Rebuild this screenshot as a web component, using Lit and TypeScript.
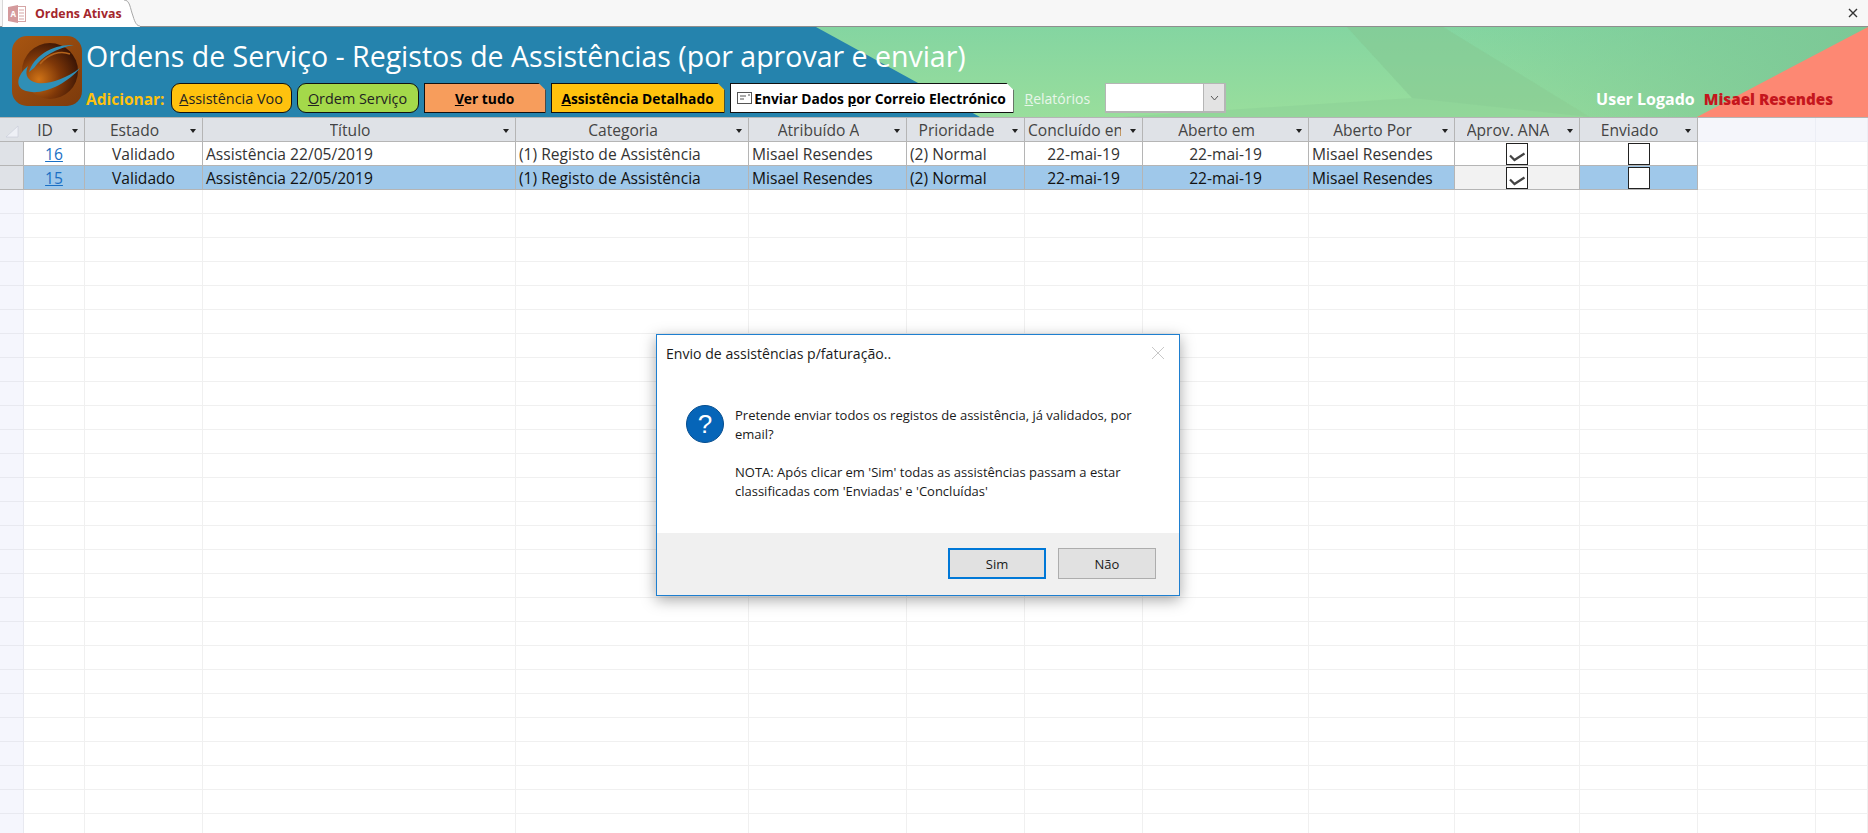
import { LitElement, html, css, svg, unsafeCSS } from "lit";
import { customElement } from "lit/decorators.js";

// column widths of the datasheet, left to right
const COLS = "24px 61px 118px 313px 233px 158px 118px 118px 166px 146px 125px 118px 118px 1fr";

const HEADERS = [
	"ID",
	"Estado",
	"Título",
	"Categoria",
	"Atribuído A",
	"Prioridade",
	"Concluído en",
	"Aberto em",
	"Aberto Por",
	"Aprov. ANA",
	"Enviado",
];

const ROWS = [
	{ id: "16", selected: false },
	{ id: "15", selected: true },
];

@customElement("app-root")
export class AppRoot extends LitElement {
	static styles = css`
		:host {
			display: block;
			height: 833px;
			overflow: hidden;
			position: relative;
			background: #fff;
			font-family: "Open Sans", "Noto Sans", sans-serif;
			color: #222;
		}
		.tabbar {
			height: 26px;
			background: #f7f7f7;
			border-bottom: 1px solid #8e8e8e;
			display: flex;
			justify-content: space-between;
		}
		.tab {
			width: 122px;
			height: 27px;
			margin-left: 2px;
			display: flex;
			align-items: center;
			gap: 9px;
			padding-left: 5px;
			box-sizing: border-box;
			background: #fff;
			border-left: 1px solid #d8d8d8;
			color: #a4262c;
			font-size: 12.4px;
			font-weight: 700;
			position: relative;
		}
		.tab-edge {
			position: absolute;
			left: 100%;
			top: 0;
			width: 16px;
			height: 27px;
		}
		.close {
			margin: 6px 8px 0 0;
			width: 14px;
			height: 14px;
		}
		.banner {
			height: 90px;
			position: relative;
			overflow: hidden;
			background: #2583ad;
		}
		.banner-bg {
			position: absolute;
			inset: 0;
			width: 100%;
			height: 100%;
		}
		.banner-main {
			position: relative;
			display: flex;
			height: 100%;
			padding: 9px 0 0 12px;
			box-sizing: border-box;
			gap: 4px;
		}
		.logo {
			width: 70px;
			height: 70px;
			flex: none;
		}
		.title {
			color: #fff;
			font-size: 28.5px;
			line-height: 40px;
			white-space: nowrap;
		}
		.toolbar {
			display: flex;
			align-items: center;
			gap: 5px;
			margin-top: 7px;
		}
		.add {
			color: #ffc20e;
			font-size: 15.5px;
			font-weight: 700;
			margin-right: 1px;
			margin-top: 2px;
		}
		.btn {
			height: 30px;
			box-sizing: border-box;
			border: 1px solid #111;
			display: flex;
			align-items: center;
			justify-content: center;
			font-size: 14.4px;
			color: #222;
			white-space: nowrap;
		}
		.btn.round {
			border-radius: 9px;
		}
		.btn.bold {
			font-size: 13.8px;
			font-weight: 700;
			color: #000;
		}
		.btn.cut {
			clip-path: polygon(0 0, calc(100% - 7px) 0, 100% 7px, 100% 100%, 0 100%);
		}
		.yellow {
			background: #ffc20e;
		}
		.green {
			background: #a4d94a;
		}
		.orange {
			background: #f79d5c;
		}
		.white {
			background: #fff;
		}
		.w-voo {
			width: 121px;
		}
		.w-ordem {
			width: 122px;
		}
		.w-ver {
			width: 122px;
		}
		.w-det {
			width: 174px;
		}
		.w-mail {
			width: 284px;
			gap: 2px;
		}
		.reports {
			color: #e8f6ea;
			font-size: 14px;
			margin: 0 10px 0 6px;
		}
		.combo {
			width: 121px;
			height: 30px;
			box-sizing: border-box;
			background: #fff;
			border-style: solid;
			border-color: #b5b5b5;
			border-width: 1px 2px 2px 1px;
			display: flex;
			justify-content: flex-end;
		}
		.combo span {
			width: 20px;
			background: #e3e3e3;
			border-left: 1px solid #b5b5b5;
			display: flex;
			align-items: center;
			justify-content: center;
		}
		.user {
			position: absolute;
			right: 35px;
			bottom: 7px;
			display: flex;
			align-items: baseline;
			gap: 9px;
			font-size: 16px;
			font-weight: 700;
			color: #fff;
		}
		.user b {
			color: #c5161d;
			font-size: 15.2px;
		}
		.sheet {
			display: grid;
			grid-template-columns: ${unsafeCSS(COLS)};
			grid-auto-rows: 24px;
			font-size: 15.6px;
			border-top: 1px solid #b5b5b5;
		}
		.cell {
			box-sizing: border-box;
			border-right: 1px solid #f0f0f0;
			border-bottom: 1px solid #f0f0f0;
			padding: 0 3px;
			white-space: nowrap;
			overflow: hidden;
			display: flex;
			align-items: center;
		}
		.blank-head {
			background: #f5f6fb;
			border-color: #eceef5;
		}
		.sel {
			background: #f5f6fd;
			border-color: #e8e9f0;
		}
		.sel.used {
			background: #dfe2e7;
			border-color: #b5b5b5;
		}
		.corner {
			background: #dfe2e7;
			border-right: 0;
			border-bottom: 1px solid #b5b5b5;
			padding: 0;
			justify-content: center;
		}
		.head {
			background: #dfe2e7;
			color: #444;
			border-right: 1px solid #b5b5b5;
			border-bottom: 1px solid #b5b5b5;
			justify-content: center;
			position: relative;
			padding-right: 21px;
		}
		.head span {
			overflow: hidden;
			min-width: 0;
		}
		.head i {
			position: absolute;
			right: 6px;
			top: 11px;
			border: 3px solid transparent;
			border-top: 4px solid #222;
			border-bottom: 0;
			width: 0;
			height: 0;
		}
		.data {
			border-right: 1px solid #b5b5b5;
			border-bottom: 1px solid #b5b5b5;
			color: #333;
		}
		.data.center {
			justify-content: center;
		}
		.data.selected {
			background: #9fc8ea;
			color: #111;
		}
		.data.flag {
			background: #f2f2f2;
		}
		.data a {
			color: #1a6fc4;
			text-decoration: underline;
		}
		.check {
			width: 22px;
			height: 22px;
			box-sizing: border-box;
			border: 1px solid #222;
			background: #fff;
			display: block;
		}
		.check svg {
			display: block;
		}
		.dialog {
			position: absolute;
			left: 656px;
			top: 334px;
			width: 524px;
			height: 262px;
			box-sizing: border-box;
			background: #fff;
			border: 1px solid #1e7fd0;
			box-shadow: 0 4px 14px rgba(0, 0, 0, 0.35);
			display: flex;
			flex-direction: column;
			font-size: 13px;
			color: #1a1a1a;
		}
		.dlg-title {
			height: 36px;
			padding: 0 14px 0 9px;
			display: flex;
			align-items: center;
			justify-content: space-between;
			font-size: 14.1px;
		}
		.dlg-body {
			flex: 1;
			display: flex;
			gap: 11px;
			padding: 34px 20px 0 29px;
		}
		.dlg-body p {
			margin: 0;
			line-height: 19px;
			width: 412px;
		}
		.dlg-body p + p {
			margin-top: 19px;
		}
		.dlg-text {
			padding-top: 1px;
		}
		.dlg-icon {
			flex: none;
		}
		.dlg-foot {
			height: 62px;
			background: #f0f0f0;
			display: flex;
			justify-content: flex-end;
			gap: 12px;
			padding: 15px 23px 0 0;
			box-sizing: border-box;
		}
		.dlg-btn {
			width: 98px;
			height: 31px;
			box-sizing: border-box;
			background: #e1e1e1;
			border: 1px solid #adadad;
			display: flex;
			align-items: center;
			justify-content: center;
			font-size: 13px;
		}
		.dlg-btn.primary {
			border: 2px solid #0078d7;
		}
	`;

	private banner() {
		return svg`
			<svg class="banner-bg" viewBox="0 0 1868 90" preserveAspectRatio="none">
				<defs>
					<linearGradient id="gr" x1="0" y1="0" x2="0" y2="1">
						<stop offset="0" stop-color="#84d5a1" />
						<stop offset="1" stop-color="#99de9c" />
					</linearGradient>
					<linearGradient id="dk" x1="0" y1="0" x2="1" y2="0">
						<stop offset="0" stop-color="#7cc896" stop-opacity="0" />
						<stop offset="1" stop-color="#7cc896" />
					</linearGradient>
				</defs>
				<polygon points="816,0 1868,0 1868,90 980,90" fill="url(#gr)" />
				<polygon points="1347,0 1443,0 1590,90 1120,90 1412,71" fill="#86c892" opacity=".3" />
				<polygon points="1347,0 1443,0 1590,90 1412,71" fill="#86c892" opacity=".3" />
				<polygon points="1443,0 1868,0 1868,90 1590,90" fill="url(#dk)" />
				<polygon points="1868,0 1868,90 1697,90" fill="#fd8873" />
			</svg>
		`;
	}

	private logo() {
		return html`
			<svg class="logo" viewBox="0 0 70 70">
				<defs>
					<linearGradient id="lg" x1="0" y1="0" x2="1" y2="1">
						<stop offset="0" stop-color="#a85510" />
						<stop offset="1" stop-color="#7c3a0c" />
					</linearGradient>
					<radialGradient id="ball" cx=".3" cy=".65" r=".85">
						<stop offset="0" stop-color="#d07316" />
						<stop offset=".45" stop-color="#7e3708" />
						<stop offset="1" stop-color="#260a04" />
					</radialGradient>
				</defs>
				<rect width="70" height="70" rx="15" fill="url(#lg)" />
				<circle cx="38" cy="35" r="28" fill="url(#ball)" />
				<path d="M28 28C36 18 48 14 58 18" fill="none" stroke="#b5641b" stroke-width="1.5" />
				<path d="M17 36C22 20 40 8 62 9C45 12 30 20 22 32Z" fill="#2f8fb6" />
				<path d="M16 30C4 40 3 52 14 55C30 60 55 48 68 32C52 44 32 50 22 46C14 43 13 37 16 30Z" fill="#2f8fb6" />
			</svg>
		`;
	}

	private check(on: boolean) {
		return html`
			<span class="check">
				${on
					? html`<svg width="20" height="20" viewBox="0 0 20 20">
							<path d="M3 11.5L7.5 16L17.5 9.5" fill="none" stroke="#444" stroke-width="2.2" />
						</svg>`
					: ""}
			</span>
		`;
	}

	private row(r: { id: string; selected: boolean }) {
		const s = r.selected ? "selected" : "";
		return html`
			<div class="cell sel used"></div>
			<div class="cell data center ${s}"><a>${r.id}</a></div>
			<div class="cell data center ${s}">Validado</div>
			<div class="cell data ${s}">Assistência 22/05/2019</div>
			<div class="cell data ${s}">(1) Registo de Assistência</div>
			<div class="cell data ${s}">Misael Resendes</div>
			<div class="cell data ${s}">(2) Normal</div>
			<div class="cell data center ${s}">22-mai-19</div>
			<div class="cell data center ${s}">22-mai-19</div>
			<div class="cell data ${s}">Misael Resendes</div>
			<div class="cell data center ${r.selected ? "flag" : ""}">${this.check(true)}</div>
			<div class="cell data center ${s}">${this.check(false)}</div>
			<div class="cell"></div>
			<div class="cell"></div>
		`;
	}

	render() {
		const blanks = Array.from({ length: 28 });
		return html`
			<div class="tabbar">
				<div class="tab">
					<svg width="18" height="20" viewBox="0 0 18 20">
						<rect x="6.5" y="2.5" width="11" height="15" fill="#fff" stroke="#d5a5a5" />
						<path d="M11 6h5M11 9h5M11 12h5M11 15h5" stroke="#d5a5a5" />
						<path d="M0 3l10-2v18L0 17z" fill="#d49a9c" />
						<text x="2.5" y="13" font-size="8" font-weight="700" fill="#fff">A</text>
					</svg>
					Ordens Ativas
					<svg class="tab-edge" viewBox="0 0 16 27">
						<path d="M0 0C6 0 6 8 9 16C11 23 13 26 16 26V27H0Z" fill="#fff" />
						<path d="M0 0C6 0 6 8 9 16C11 23 13 26 16 26" fill="none" stroke="#a8a8a8" />
					</svg>
				</div>
				<svg class="close" viewBox="0 0 14 14">
					<path d="M3 3l8 8M11 3l-8 8" stroke="#333" stroke-width="1.4" />
				</svg>
			</div>
			<div class="banner">
				${this.banner()}
				<div class="banner-main">
					${this.logo()}
					<div>
						<div class="title">Ordens de Serviço - Registos de Assistências (por aprovar e enviar)</div>
						<div class="toolbar">
							<span class="add">Adicionar:</span>
							<div class="btn round yellow w-voo"><span><u>A</u>ssistência Voo</span></div>
							<div class="btn round green w-ordem"><span><u>O</u>rdem Serviço</span></div>
							<div class="btn orange bold cut w-ver"><span><u>V</u>er tudo</span></div>
							<div class="btn yellow bold cut w-det"><span><u>A</u>ssistência Detalhado</span></div>
							<div class="btn white bold cut w-mail">
								<svg width="15" height="12" viewBox="0 0 15 12">
									<rect x=".5" y=".5" width="14" height="11" fill="#fff" stroke="#555" />
									<path d="M3 4h6M3 7h4M11 3h2" stroke="#555" />
								</svg>
								<span>Enviar Dados <u>p</u>or Correio Electrónico</span>
							</div>
							<span class="reports"><u>R</u>elatórios</span>
							<div class="combo">
								<span>
									<svg width="9" height="6" viewBox="0 0 9 6">
										<path d="M1 1l3.5 4L8 1" fill="none" stroke="#555" />
									</svg>
								</span>
							</div>
						</div>
					</div>
				</div>
				<div class="user">User Logado <b>Misael Resendes</b></div>
			</div>
			<div class="sheet">
				<div class="cell corner">
					<svg width="16" height="16" viewBox="0 0 16 16">
						<path d="M2 15L14 4v11z" fill="#eef0f6" stroke="#c6cbd6" stroke-width=".6" />
					</svg>
				</div>
				${HEADERS.map((h) => html`<div class="cell head"><span>${h}</span><i></i></div>`)}
				<div class="cell blank-head"></div>
				<div class="cell blank-head"></div>
				${ROWS.map((r) => this.row(r))}
				${blanks.map(
					() => html`
						<div class="cell sel"></div>
						${Array.from({ length: 13 }).map(() => html`<div class="cell"></div>`)}
					`
				)}
			</div>
			<div class="dialog">
				<div class="dlg-title">
					Envio de assistências p/faturação..
					<svg width="14" height="14" viewBox="0 0 14 14">
						<path d="M1 1l12 12M13 1L1 13" stroke="#c8c8c8" stroke-width="1" />
					</svg>
				</div>
				<div class="dlg-body">
					<svg class="dlg-icon" width="38" height="38" viewBox="0 0 38 38">
						<circle cx="19" cy="19" r="18.5" fill="#0665b8" stroke="#054d8e" />
						<text x="19" y="28" font-size="26" font-family="Liberation Sans" fill="#fff" text-anchor="middle">?</text>
					</svg>
					<div class="dlg-text">
						<p>Pretende enviar todos os registos de assistência, já validados, por email?</p>
						<p>NOTA: Após clicar em 'Sim' todas as assistências passam a estar classificadas com 'Enviadas' e 'Concluídas'</p>
					</div>
				</div>
				<div class="dlg-foot">
					<div class="dlg-btn primary">Sim</div>
					<div class="dlg-btn">Não</div>
				</div>
			</div>
		`;
	}
}
